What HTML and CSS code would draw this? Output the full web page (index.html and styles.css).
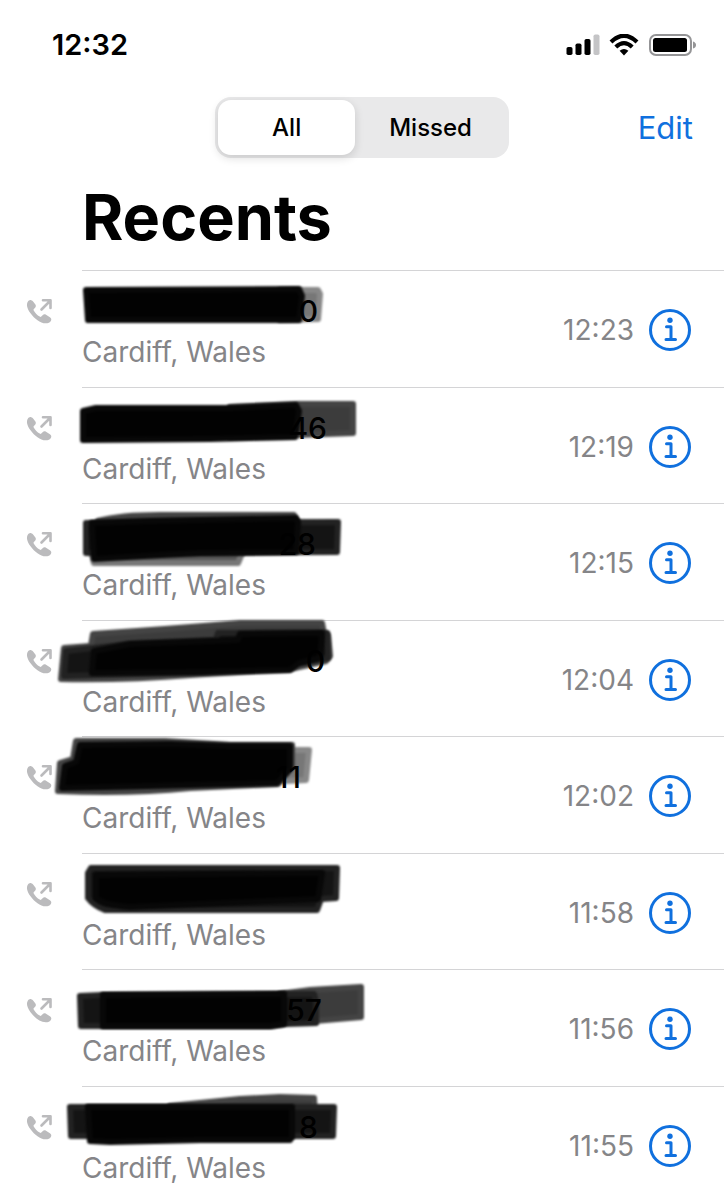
FILE: index.html
```html
<!DOCTYPE html>
<html lang="en">
<head>
  <meta charset="UTF-8">
  <meta name="viewport" content="width=device-width, initial-scale=1.0">
  <title>Recents</title>
  <link rel="stylesheet" href="styles.css">
</head>
<body>
  <svg class="defs" aria-hidden="true">
    <symbol id="icon-outgoing" viewBox="0 0 26 26">
      <path fill="currentColor" d="M5.200 2.200C3.900 1.600 2.500 2.600 1.800 3.700C.2 6.300.8 10.200 4.500 15.200C8.600 20.700 14 25.300 19.700 25.300C22.100 25.300 24 24.500 25 22.700C25.700 21.400 25.200 20.100 23.900 19.200L20 16.700C18.700 15.900 17.600 16.200 16.600 17.200L15.300 18.500C14.800 19 14.300 19 13.700 18.600C11.300 17.200 9.100 14.900 7.700 12.500C7.300 11.900 7.400 11.400 7.900 10.900L9.100 9.700C10 8.700 10.100 7.600 9.400 6.500L7.300 3.700C6.700 2.900 6.100 2.500 5.200 2.200Z"/>
      <path fill="none" stroke="currentColor" stroke-width="2.600" stroke-linecap="round" stroke-linejoin="round" d="M15.500 11.500L24 3M17 2.300H24.500V10"/>
    </symbol>
    <symbol id="icon-info" viewBox="0 0 42 42">
      <circle cx="21" cy="21" r="19.500" fill="none" stroke="currentColor" stroke-width="3"/>
      <circle cx="21" cy="11.300" r="2.700" fill="currentColor"/>
      <path fill="none" stroke="currentColor" stroke-width="3" stroke-linecap="round" stroke-linejoin="round" d="M17.500 17.800H22V30.500M17 30.500H26.500"/>
    </symbol>
  </svg>

  <header>
    <div class="status-bar">
      <span class="clock">12:32</span>
      <div class="status-icons">
        <svg width="34" height="22" viewBox="0 0 34 22" aria-label="Signal">
          <rect x="0.500" y="13" width="6" height="8" rx="1.800"/>
          <rect x="9.500" y="9.500" width="6" height="11.500" rx="1.800"/>
          <rect x="18.500" y="5" width="6" height="16" rx="1.800"/>
          <rect x="27.500" y="0.500" width="6" height="20.500" rx="1.800" fill="#c4c4c6"/>
        </svg>
        <svg width="30" height="22" viewBox="0 0 30 22" aria-label="Wi-Fi">
          <path fill="none" stroke="#000" stroke-width="4.200" d="M2 8Q15 -4.500 28 8"/>
          <path fill="none" stroke="#000" stroke-width="4.200" d="M6.800 13Q15 5.300 23.200 13"/>
          <path d="M15 21.500L10.600 16.800Q15 13.200 19.400 16.800Z"/>
        </svg>
        <svg width="48" height="22" viewBox="0 0 48 22" aria-label="Battery">
          <rect x="2" y="1" width="41" height="20" rx="6" fill="none" stroke="#949496" stroke-width="2"/>
          <rect x="5" y="4" width="34" height="14" rx="2.500"/>
          <path fill="#949496" d="M45 7.500Q48 8.500 48 11Q48 13.500 45 14.500Z"/>
        </svg>
      </div>
    </div>

    <nav class="toolbar">
      <div class="segmented">
        <button type="button" class="selected" aria-pressed="true">All</button>
        <button type="button" aria-pressed="false">Missed</button>
      </div>
      <button type="button" class="edit">Edit</button>
    </nav>
    <h1>Recents</h1>
  </header>

  <ul class="calls">
    <li>
      <svg class="outgoing" role="img" aria-label="Outgoing call"><use href="#icon-outgoing"/></svg>
      <div class="call">
        <div class="caller"><span class="number"></span><span class="place">Cardiff, Wales</span></div>
        <time>12:23</time>
        <button type="button" class="info" aria-label="Call details"><svg><use href="#icon-info"/></svg></button>
      </div>
      <svg class="marker">
        <path class="light" d="M280 20L318 20L320 24L318 49L280 50Z"/>
        <path class="dark" d="M86 20L299 19L302 26L299 50L88 50Z"/>
        <text x="318" y="52">0</text>
      </svg>
    </li>
    <li>
      <svg class="outgoing" role="img" aria-label="Outgoing call"><use href="#icon-outgoing"/></svg>
      <div class="call">
        <div class="caller"><span class="number"></span><span class="place">Cardiff, Wales</span></div>
        <time>12:19</time>
        <button type="button" class="info" aria-label="Call details"><svg><use href="#icon-info"/></svg></button>
      </div>
      <svg class="marker">
        <path class="mid" d="M230 20L300 17L353 17L353 46L296 48L230 50Z"/>
        <path class="dark" d="M83 24L96 21L230 21L296 18L299 24L295 50L210 52L83 53Z"/>
        <text x="327" y="52">46</text>
      </svg>
    </li>
    <li>
      <svg class="outgoing" role="img" aria-label="Outgoing call"><use href="#icon-outgoing"/></svg>
      <div class="call">
        <div class="caller"><span class="number"></span><span class="place">Cardiff, Wales</span></div>
        <time>12:15</time>
        <button type="button" class="info" aria-label="Call details"><svg><use href="#icon-info"/></svg></button>
      </div>
      <svg class="marker">
        <path class="mid" d="M98 18Q120 12 160 12L294 12L298 22L98 30Z"/>
        <path class="fade" d="M91 46L243 48L238 60L94 60Z"/>
        <path class="soft" d="M86 20L338 19L337 49L86 50Z"/>
        <path class="dark" d="M92 20L150 18L296 15L298 19L296 49L200 50Q140 53 94 56Z"/>
        <text x="316" y="52">28</text>
      </svg>
    </li>
    <li>
      <svg class="outgoing" role="img" aria-label="Outgoing call"><use href="#icon-outgoing"/></svg>
      <div class="call">
        <div class="caller"><span class="number"></span><span class="place">Cardiff, Wales</span></div>
        <time>12:04</time>
        <button type="button" class="info" aria-label="Call details"><svg><use href="#icon-info"/></svg></button>
      </div>
      <svg class="marker">
        <path class="mid" d="M93 14Q170 9 240 3L322 3L324 14L328 15L330 36L326 41L290 49L190 55Q130 60 61 59L64 28L91 26Z"/>
        <path class="soft" d="M218 13L327 13L328 38L299 43L200 52L64 56L66 31L130 24L216 20Z"/>
        <path class="dark" d="M240 14L322 13L320 38L299 43L290 50L200 52L92 53L94 31L130 24L238 20Z"/>
        <text x="325" y="52">0</text>
      </svg>
    </li>
    <li>
      <svg class="outgoing" role="img" aria-label="Outgoing call"><use href="#icon-outgoing"/></svg>
      <div class="call">
        <div class="caller"><span class="number"></span><span class="place">Cardiff, Wales</span></div>
        <time>12:02</time>
        <button type="button" class="info" aria-label="Call details"><svg><use href="#icon-info"/></svg></button>
      </div>
      <svg class="marker">
        <path class="light" d="M284 14L309 14L306 44L284 45Z"/>
        <path class="mid" d="M76 5L165 5L230 9L292 9L292 30L278 48L190 52Q130 58 58 55L60 27L73 23Z"/>
        <path class="dark" d="M80 9L170 8L230 10L290 10L290 33L277 47L190 49L62 52L65 30L76 26Z"/>
        <text x="301" y="52">11</text>
      </svg>
    </li>
    <li>
      <svg class="outgoing" role="img" aria-label="Outgoing call"><use href="#icon-outgoing"/></svg>
      <div class="call">
        <div class="caller"><span class="number"></span><span class="place">Cardiff, Wales</span></div>
        <time>11:58</time>
        <button type="button" class="info" aria-label="Call details"><svg><use href="#icon-info"/></svg></button>
      </div>
      <svg class="marker">
        <path class="soft" d="M91 15L337 15L336 45L321 46L317 57L105 57Q94 53 88 45L88 20Z"/>
        <path class="dark" d="M96 22L322 20L318 46L130 54Q104 52 96 45Z"/>
      </svg>
    </li>
    <li>
      <svg class="outgoing" role="img" aria-label="Outgoing call"><use href="#icon-outgoing"/></svg>
      <div class="call">
        <div class="caller"><span class="number"></span><span class="place">Cardiff, Wales</span></div>
        <time>11:56</time>
        <button type="button" class="info" aria-label="Call details"><svg><use href="#icon-info"/></svg></button>
      </div>
      <svg class="marker">
        <path class="mid" d="M280 25L310 21L361 18L361 48L314 52L280 53Z"/>
        <path class="soft" d="M80 27L103 26L314 25L316 33L316 54L284 55L270 57L81 57Z"/>
        <path class="dark" d="M103 26L284 25L284 55L270 57L103 57Z"/>
        <text x="322" y="52">57</text>
      </svg>
    </li>
    <li>
      <svg class="outgoing" role="img" aria-label="Outgoing call"><use href="#icon-outgoing"/></svg>
      <div class="call">
        <div class="caller"><span class="number"></span><span class="place">Cardiff, Wales</span></div>
        <time>11:55</time>
        <button type="button" class="info" aria-label="Call details"><svg><use href="#icon-info"/></svg></button>
      </div>
      <svg class="marker">
        <path class="mid" d="M170 20L240 13L280 11L314 12L315 30L170 30Z"/>
        <path class="soft" d="M70 21L334 21L333 50L71 50Z"/>
        <path class="dark" d="M88 21L292 21L292 51L290 54L200 54L110 56L90 55Z"/>
        <text x="318" y="52">8</text>
      </svg>
    </li>
  </ul>
</body>
</html>
```
FILE: styles.css
```css
* {
  box-sizing: border-box;
}
body {
  margin: 0;
  background-color: #fff;
  color: #000;
  font-family: Inter, Roboto, sans-serif;
  font-size: 28px;
  line-height: 40px;
}
button {
  border: 0;
  padding: 0;
  background: none;
  color: inherit;
  font: inherit;
  cursor: pointer;
}
.defs {
  display: none;
}
.status-bar {
  display: flex;
  justify-content: space-between;
  align-items: center;
  padding: 25px 28px 0 52px;
}
.clock {
  font-size: 29px;
  font-weight: 600;
}
.status-icons {
  display: flex;
  align-items: center;
  gap: 9px;
}
.toolbar {
  display: grid;
  grid-template-columns: 1fr auto 1fr;
  align-items: center;
  padding: 32px 31px 0;
}
.segmented {
  grid-column: 2;
  display: flex;
  padding: 3px;
  border-radius: 16px;
  background-color: #e9e9ea;
  font-size: 24px;
  font-weight: 500;
}
.segmented button {
  height: 55px;
  padding: 0 34px;
  border-radius: 13px;
}
.segmented .selected {
  padding: 0 54px;
  background-color: #fff;
  box-shadow: 0 3px 10px rgba(0, 0, 0, 0.14);
}
.edit {
  justify-self: end;
  color: #1070de;
  font-size: 31px;
}
h1 {
  margin: 0;
  padding: 19px 0 13px 82px;
  font-size: 63px;
  font-weight: 700;
  line-height: 80px;
}
.calls {
  margin: 0;
  padding: 0;
  list-style: none;
}
.calls li {
  position: relative;
  display: grid;
  grid-template-columns: 82px 1fr;
}
.outgoing {
  width: 26px;
  height: 26px;
  margin: 28px 0 0 26px;
  color: #bbbbbd;
}
.call {
  display: flex;
  align-items: center;
  gap: 15px;
  padding: 16px 33px 15px 0;
  border-top: 1px solid #d4d4d6;
}
.calls li:nth-child(even) .call {
  padding-bottom: 14px;
}
.calls li:last-child .call {
  padding-bottom: 10px;
}
.caller {
  flex: 1;
  display: flex;
  flex-direction: column;
}
.number {
  height: 45px;
}
.place, time {
  color: #858588;
}
.info {
  color: #1070de;
}
.info svg {
  display: block;
  width: 42px;
  height: 42px;
}
/* Pen strokes laid over the caller's number */
.marker {
  position: absolute;
  top: 0;
  left: 0;
  width: 380px;
  height: 110px;
  overflow: visible;
  pointer-events: none;
}
.marker path {
  stroke-width: 6;
  stroke-linejoin: round;
  filter: blur(1px);
}
.marker .dark {
  fill: #020202;
  stroke: #080808;
}
.marker .soft {
  fill: #141414;
  stroke: #222;
}
.marker .mid {
  fill: #3c3c3c;
  stroke: #444;
}
.marker .light {
  fill: #777;
  stroke: #888;
}
.marker .fade {
  fill: #555;
  stroke: #777;
}
.marker text {
  font-size: 30px;
  font-weight: 500;
  text-anchor: end;
}
```
